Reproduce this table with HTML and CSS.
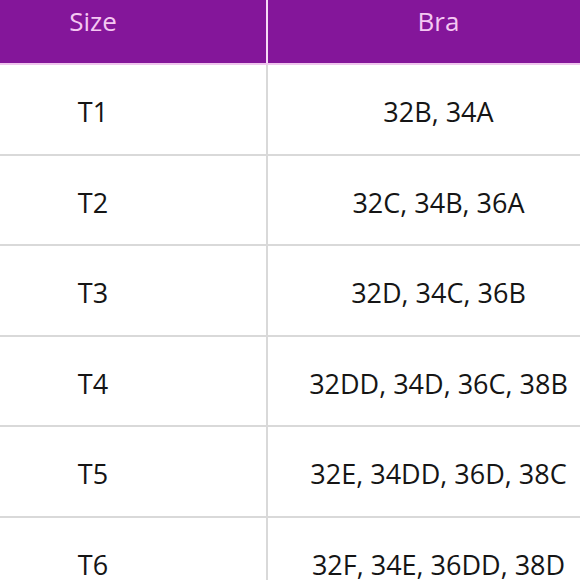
FILE: index.html
```html
<!DOCTYPE html>
<html>
<head>
<meta charset="utf-8">
<link rel="stylesheet" href="styles.css">
</head>
<body>
<div class="frame">
  <table class="chart">
    <thead>
      <tr><th class="c1">Size</th><th class="c2">Bra</th></tr>
    </thead>
    <tbody>
      <tr><td>T1</td><td>32B, 34A</td></tr>
      <tr><td>T2</td><td>32C, 34B, 36A</td></tr>
      <tr><td>T3</td><td>32D, 34C, 36B</td></tr>
      <tr><td>T4</td><td>32DD, 34D, 36C, 38B</td></tr>
      <tr><td>T5</td><td>32E, 34DD, 36D, 38C</td></tr>
      <tr><td>T6</td><td>32F, 34E, 36DD, 38D</td></tr>
    </tbody>
  </table>
</div>
</body>
</html>
```
FILE: styles.css
```css
html, body {
  margin: 0;
  padding: 0;
  background: #ffffff;
}
.frame {
  width: 580px;
  height: 580px;
  overflow: hidden;
}
.chart {
  border-collapse: collapse;
  table-layout: fixed;
  width: 689px;
  margin-left: -80px;
  margin-top: -21px;
  font-family: "Open Sans", "Noto Sans", sans-serif;
}
.chart th {
  background: #84169a;
  color: #f4c8f2;
  font-weight: 400;
  font-size: 26px;
  height: 84px;
  padding: 0;
  text-align: center;
  border-bottom: 2px solid #f0c6ee;
}
.chart th.c1 {
  width: 346px;
  border-right: 2px solid #f6dcf5;
}
.chart td {
  box-sizing: border-box;
  height: 90.5px;
  padding: 5px 0 0 0;
  text-align: center;
  color: #151515;
  font-size: 27px;
  border-bottom: 2px solid #d9d9d9;
}
.chart td:first-child {
  border-right: 2px solid #d9d9d9;
}
```
